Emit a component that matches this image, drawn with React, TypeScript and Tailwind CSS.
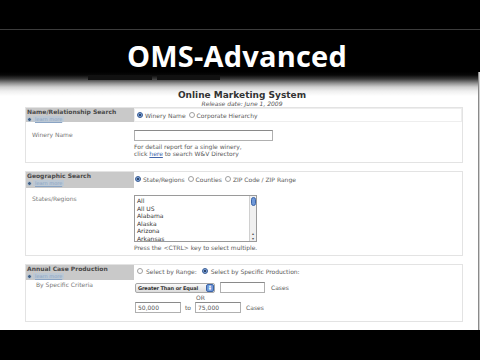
import React from "react";

const Radio = ({ on }: { on?: boolean }) =>
  on ? (
    <span className="inline-flex w-[6px] h-[6px] rounded-full bg-[#7ea2d8] border border-[#3d5f95] items-center justify-center shrink-0">
      <span className="w-[2px] h-[2px] rounded-full bg-[#142848]" />
    </span>
  ) : (
    <span className="inline-block w-[6px] h-[6px] rounded-full border border-[#a0a0a0] bg-white shrink-0" />
  );

const LearnMore = () => (
  <div className="flex items-center gap-[1px] h-[6px] mt-[1px]">
    <span className="w-[5px] h-[5px] rounded-full bg-[#3f5f86] border border-[#c0ccd8]" />
    <span className="text-[5px] leading-[6px] text-[#8aa4c4] underline bg-[#bcc8d4] px-[2px]">learn more</span>
  </div>
);

const Header = ({ title, h }: { title: string; h: string }) => (
  <div className={`w-[108px] shrink-0 bg-[#c9c9c9] pl-[1px] pt-[1px] ${h}`}>
    <div className="text-[6px] leading-[6px] font-bold text-[#4a4a4a] whitespace-nowrap">{title}</div>
    <LearnMore />
  </div>
);

const Input = ({ w, v }: { w: string; v?: string }) => (
  <div className={`${w} h-[11px] border border-[#b0b0b0] border-t-[#8a8a8a] bg-white text-[6px] leading-[9px] pl-[2px] text-[#555]`}>{v}</div>
);

export default function App() {
  return (
    <div className="w-[480px] h-[360px] bg-black overflow-hidden flex flex-col font-['DejaVu_Sans',sans-serif]">
      <div className="h-[72px] shrink-0 flex flex-col">
        <div className="h-[29px]" />
        <div className="h-px bg-[#3c3c3c]" />
        <div className="flex-1 flex justify-center pt-[11px] pr-[6px]">
          <div className="font-['Open_Sans',sans-serif] font-bold text-white text-[29px] leading-[29px] tracking-[0.2px]">
            OMS-Advanced
          </div>
        </div>
      </div>
      <div className="h-[258px] shrink-0 flex">
        <div className="w-[478px] bg-white relative">
          <div className="absolute top-0 left-0 right-0 h-[24px] pointer-events-none bg-[linear-gradient(to_bottom,#000_0px,#080808_3px,#3a3a3a_7px,#8c8c8c_11px,#cfcfcf_15px,#eeeeee_19px,rgba(255,255,255,0)_24px)]" />
          <div className="absolute top-[3px] left-[88px] w-[64px] h-[5px] bg-[#111] pointer-events-none" />
          <div className="absolute top-[3px] left-[157px] w-[63px] h-[5px] bg-[#111] pointer-events-none" />
          <div className="relative pt-[18px] flex flex-col items-center">
            <div className="text-[9px] leading-[11px] font-bold text-[#333] pl-[6px]">Online Marketing System</div>
            <div className="text-[6px] leading-[6px] italic text-[#555] pl-[6px]">Release date: June 1, 2009</div>
          </div>
          <div className="ml-[25px] w-[438px] flex flex-col gap-[8px] text-[6px] leading-[7px] text-[#5a5a5a]">
            {/* Section 1 */}
            <div className="h-[56px] border border-[#e3e3e3] flex flex-col">
              <div className="flex h-[14px]">
                <Header title="Name/Relationship Search" h="h-[14px]" />
                <div className="flex-1 flex items-center pl-[2px] gap-[2px] border border-[#eeeeee]">
                  <Radio on />
                  <span className="mr-[1px]">Winery Name</span>
                  <Radio />
                  <span>Corporate Hierarchy</span>
                </div>
              </div>
              <div className="flex flex-1">
                <div className="w-[108px] pl-[6px] pt-[9px] text-[#777]">Winery Name</div>
                <div className="flex-1 pt-[8px]">
                  <Input w="w-[139px]" />
                  <div className="mt-[2px] leading-[7px]">For detail report for a single winery,</div>
                  <div className="leading-[7px]">
                    click <span className="underline text-[#4466aa]">here</span> to search W&amp;V Directory
                  </div>
                </div>
              </div>
            </div>
            {/* Section 2 */}
            <div className="h-[85px] border border-[#e3e3e3] flex flex-col">
              <div className="flex h-[16px]">
                <Header title="Geographic Search" h="h-[16px]" />
                <div className="flex-1 flex items-start pt-[4px] pl-[1px] gap-[2px]">
                  <Radio on />
                  <span className="mr-[1px]">State/Regions</span>
                  <Radio />
                  <span className="mr-[1px]">Counties</span>
                  <Radio />
                  <span>ZIP Code / ZIP Range</span>
                </div>
              </div>
              <div className="flex flex-1">
                <div className="w-[108px] pl-[6px] pt-[7px] text-[#777]">States/Regions</div>
                <div className="flex-1 pt-[7px]">
                  <div className="w-[123px] h-[47px] border border-[#9a9a9a] flex bg-white">
                    <div className="flex-1 pl-[2px] pt-[1px] text-[#333] text-[6px] leading-[7.5px]">
                      <div>All</div>
                      <div>All US</div>
                      <div>Alabama</div>
                      <div>Alaska</div>
                      <div>Arizona</div>
                      <div>Arkansas</div>
                    </div>
                    <div className="w-[7px] border-l border-[#d0d0d0] bg-[#f0f0f0] flex flex-col items-center pt-[1px]">
                      <div className="w-[5px] h-[9px] rounded-[3px] bg-[#6f98d8] border border-[#3a64a8]" />
                      <div className="flex-1" />
                      <div className="text-[4px] leading-[5px] text-[#555]">▴</div>
                      <div className="text-[4px] leading-[5px] text-[#555]">▾</div>
                    </div>
                  </div>
                  <div className="mt-[2px]">Press the &lt;CTRL&gt; key to select multiple.</div>
                </div>
              </div>
            </div>
            {/* Section 3 */}
            <div className="h-[58px] border border-[#e3e3e3] flex flex-col">
              <div className="flex h-[15px]">
                <Header title="Annual Case Production" h="h-[15px]" />
                <div className="flex-1 flex items-start pt-[3px] pl-[3px] gap-[3px]">
                  <Radio />
                  <span className="mr-[2px]">Select by Range:</span>
                  <Radio on />
                  <span>Select by Specific Production:</span>
                </div>
              </div>
              <div className="flex flex-1">
                <div className="w-[108px] pl-[10px] pt-[1px] text-[#777] leading-[7px]">By Specific Criteria</div>
                <div className="flex-1 pt-[2px] pl-[1px]">
                  <div className="flex items-center gap-[5px]">
                    <div className="w-[80px] h-[10px] rounded-[2px] border border-[#a8a8a8] bg-[linear-gradient(to_bottom,#fafafa,#dcdcdc)] flex items-center overflow-hidden">
                      <span className="flex-1 pl-[2px] font-bold text-[#333] text-[5px] leading-[8px] whitespace-nowrap tracking-[-0.1px]">Greater Than or Equal</span>
                      <span className="w-[8px] h-[8px] shrink-0 rounded-[2px] bg-[#6f98d8] border border-[#3a64a8] flex flex-col items-center justify-center text-white text-[3px] leading-[3px]">
                        <span>▲</span>
                        <span>▼</span>
                      </span>
                    </div>
                    <Input w="w-[45px]" />
                    <span className="ml-[1px]">Cases</span>
                  </div>
                  <div className="pl-[61px] leading-[6px] mt-[2px]">OR</div>
                  <div className="flex items-center gap-[4px] mt-[1px]">
                    <Input w="w-[46px]" v="50,000" />
                    <span>to</span>
                    <Input w="w-[46px]" v="75,000" />
                    <span className="ml-[1px]">Cases</span>
                  </div>
                </div>
              </div>
            </div>
          </div>
        </div>
        <div className="w-px bg-[#8a8a8a]" />
        <div className="w-px bg-[#d0d0d0]" />
      </div>
      <div className="flex-1 bg-black" />
    </div>
  );
}
